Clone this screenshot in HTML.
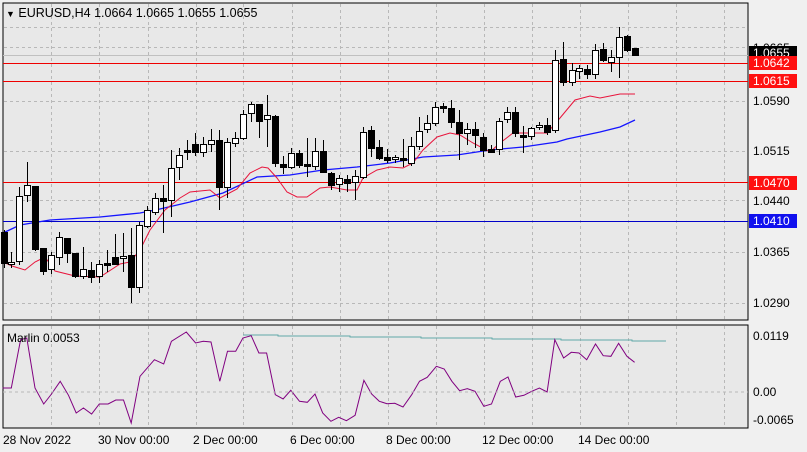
<!DOCTYPE html><html><head><style>
body{margin:0;width:807px;height:452px;background:#f0f0f0;overflow:hidden}
svg{display:block;font-family:"Liberation Sans",Tahoma,sans-serif}
</style></head><body>
<svg width="807" height="452" viewBox="0 0 807 452" xmlns="http://www.w3.org/2000/svg">
<rect x="0" y="0" width="807" height="452" fill="#f0f0f0"/>
<rect x="3" y="3" width="745" height="317" fill="#e8e8e8" stroke="#000" stroke-width="1"/>
<rect x="3" y="325" width="745" height="103" fill="#e8e8e8" stroke="#000" stroke-width="1"/>
<g stroke="#b8b8b8" stroke-dasharray="3,3" stroke-width="1" id="grid"></g>
<g id="hl"></g>
<polyline fill="none" stroke="#1515ff" stroke-width="1.3" points="3,233 20,225 50,220 100,217 140,213 160,209 190,202 223,193 257,177 290,175 323,170 357,167 390,163 423,157 457,155 490,150 523,147 557,142 567,139 600,132 620,127 635,120"/>
<polyline fill="none" stroke="#e8143c" stroke-width="1" points="3,262 12,266 25,270 35,262 45,257 55,271 75,276 100,277 120,264 130,262 140,250 150,230 165,210 180,198 190,192 210,190 220,198 237,189 250,173 262,167 268,168 277,178 287,192 297,197 307,197 320,188 330,187 347,190 357,190 363,178 377,170 390,167 403,168 413,163 423,150 437,137 450,133 460,135 473,143 490,152 500,143 513,133 527,133 547,133 560,118 575,100 590,96 600,98 610,96 620,94 635,94"/>
<g id="candles"></g>
<polyline fill="none" stroke="#5fa8a8" stroke-width="1" points="243,335 278,335 278,336 350,336 350,337 421,337 421,338 492,338 492,339 561,339 561,340 632,340 632,341 666,341"/>
<g id="osc"></g>
<line x1="3" y1="392" x2="748" y2="392" stroke="#b8b8b8" stroke-dasharray="3,3"/>
<g font-size="12" fill="#000">
<text x="6" y="17" font-size="12.5"><tspan font-size="9">▼</tspan> EURUSD,H4  1.0664 1.0665 1.0655 1.0655</text>
<text x="7" y="342">Marlin 0.0053</text>
<text x="753" y="52">1.0665</text>
<text x="753" y="105">1.0590</text>
<text x="753" y="155">1.0515</text>
<text x="753" y="205">1.0440</text>
<text x="753" y="256">1.0365</text>
<text x="753" y="307">1.0290</text>
<text x="753" y="340">0.0119</text>
<text x="753" y="396">0.00</text>
<text x="753" y="424">-0.0065</text>
<text x="3" y="444">28 Nov 2022</text>
<text x="98" y="444">30 Nov 00:00</text>
<text x="193" y="444">2 Dec 00:00</text>
<text x="290" y="444">6 Dec 00:00</text>
<text x="386" y="444">8 Dec 00:00</text>
<text x="482" y="444">12 Dec 00:00</text>
<text x="578" y="444">14 Dec 00:00</text>
</g>
<rect x="749" y="46" width="48" height="13" fill="#000"/>
<text x="753" y="57" font-size="12" fill="#fff">1.0655</text>
<rect x="749" y="56" width="48" height="14" fill="#ff1010"/>
<text x="753" y="67" font-size="12" fill="#fff">1.0642</text>
<rect x="749" y="74" width="48" height="14" fill="#ff1010"/>
<text x="753" y="85" font-size="12" fill="#fff">1.0615</text>
<rect x="749" y="176" width="48" height="14" fill="#ff1010"/>
<text x="753" y="187" font-size="12" fill="#fff">1.0470</text>
<rect x="749" y="214" width="48" height="14" fill="#1010ee"/>
<text x="753" y="225" font-size="12" fill="#fff">1.0410</text>
</svg>
<script>
var NS="http://www.w3.org/2000/svg";
function el(p,t,a){var e=document.createElementNS(NS,t);for(var k in a)e.setAttribute(k,a[k]);document.getElementById(p).appendChild(e);return e;}
[51,99,148,196,243,292,340,388,436,484,532,580,628,676,724].forEach(function(x){el("grid","line",{x1:x+.5,y1:4,x2:x+.5,y2:320});el("grid","line",{x1:x+.5,y1:326,x2:x+.5,y2:428});});
[27,47,101,151,200,252,303].forEach(function(y){el("grid","line",{x1:4,y1:y+.5,x2:748,y2:y+.5});});
el("hl","line",{x1:3,y1:55.5,x2:748,y2:55.5,stroke:"#c0c0c0"});
[[63,"#e00"],[81,"#e00"],[182,"#e00"],[221,"#0000c8"]].forEach(function(h){el("hl","line",{x1:3,y1:h[0]+.5,x2:748,y2:h[0]+.5,stroke:h[1],"stroke-width":1});});
var C=[[4,232,263,230,268,1],[11,262,264,252,268,0],[19,196,261,187,265,0],[27,185,195,162,202,0],[35,186,249,186,251,1],[43,248,271,248,275,1],[51,255,269,252,274,0],[59,237,257,232,265,0],[67,238,253,238,263,1],[75,253,276,253,278,1],[83,269,276,247,279,0],[91,270,277,262,283,1],[99,264,276,260,283,0],[107,263,265,250,272,1],[115,257,264,234,265,1],[123,256,258,233,272,0],[131,255,287,228,303,1],[139,225,287,222,293,0],[147,210,226,206,228,0],[155,198,212,193,215,0],[163,198,201,185,233,1],[171,168,200,150,217,0],[179,155,167,148,180,0],[187,150,152,140,160,1],
[195,144,152,133,156,1],[203,144,152,137,157,0],[211,140,144,129,152,0],[219,140,187,130,210,1],[227,142,187,138,198,0],[235,138,143,132,147,0],[243,114,138,110,140,0],[251,104,113,102,122,0],[259,104,121,104,138,1],[267,115,119,95,147,0],[275,116,163,115,167,1],[283,164,167,156,174,1],[291,153,167,148,169,0],[299,153,165,150,168,1],[307,164,166,138,177,1],[315,151,166,138,170,0],[323,151,172,140,173,1],[331,173,185,172,190,1],[339,178,184,175,192,0],[347,179,183,175,192,1],[355,176,182,170,200,0],[363,132,177,127,179,0],[371,130,148,126,157,1],[379,147,158,140,160,1],[387,157,160,149,163,1],[395,157,159,155,163,0],[403,158,160,139,167,1],[411,146,163,137,166,0],[419,131,146,117,150,0],[427,123,129,115,133,0],[435,107,123,102,126,0],[443,106,108,103,113,1],[451,108,122,100,128,1],[459,122,133,110,160,1],[467,129,133,123,145,0],[475,129,135,122,148,1],[483,137,150,133,157,1],[491,149,152,145,153,1],[499,121,149,118,155,0],[507,112,119,107,123,0],[515,112,133,107,137,1],[523,135,137,126,153,1],[531,128,136,127,140,0],[539,125,127,122,130,0],[547,125,132,118,135,1],
[555,60,130,50,133,0],[563,59,82,42,86,1],[572,70,82,63,86,0],[579,68,71,65,79,0],[587,69,74,65,79,1],[595,50,74,44,79,0],[603,49,60,43,62,1],[611,57,62,50,72,0],[619,37,57,27,78,0],[627,36,50,35,52,1],[635,48,55,48,55,1]];
C.forEach(function(c){var x=c[0]+.5;el("candles","line",{x1:x,y1:c[3],x2:x,y2:c[4],stroke:"#000"});
var h=Math.max(1,c[2]-c[1]);el("candles","rect",{x:c[0]-3+.5,y:c[1]+.5,width:6,height:h,fill:c[5]?"#000":"#fff",stroke:"#000"});});
var O=[[5,210],[22,210],[40,65],[52,60],[68,210],[85,258],[100,228],[117,190],[133,232],[148,285],[162,270],[178,288],[193,258],[210,258],[225,246],[240,246],[255,315],[272,175],[300,125],[318,138],[333,70],[362,42],[380,75],[395,70],[410,72],[427,190],[442,100],[458,100],[472,60],[488,53],[503,105],[518,105],[535,230],[550,243],[565,217],[582,250],[597,253],[612,228],[627,285],[643,310],[658,298],[673,308],[690,292],[707,187],[722,228],[737,250],[752,257],[767,256],[783,267],[800,230],[815,190],[830,178],[848,145],[863,153],[878,190],[893,218],[908,212],[923,220],[940,265],[955,258],[972,190],[987,177],[1002,237],[1018,232],[1033,220],[1048,210],[1063,222],[1078,65],[1095,120],[1110,103],[1125,105],[1140,125],[1157,78],[1172,113],[1187,115],[1202,76],[1218,115],[1233,133]];
el("osc","polyline",{fill:"none",stroke:"#800080","stroke-width":1,points:O.map(function(p){return (p[0]/1.943).toFixed(1)+","+(318+p[1]/3).toFixed(1)}).join(" ")});
</script>
</body></html>
